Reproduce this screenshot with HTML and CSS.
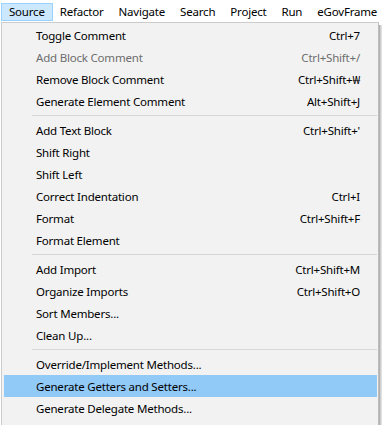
FILE: index.html
```html
<!DOCTYPE html>
<html>
<head>
<meta charset="utf-8">
<link rel="stylesheet" href="styles.css">
</head>
<body>
<div class="menubar">
  <div class="mb-item active">Source</div>
  <div class="mb-item">Refactor</div>
  <div class="mb-item">Navigate</div>
  <div class="mb-item">Search</div>
  <div class="mb-item">Project</div>
  <div class="mb-item">Run</div>
  <div class="mb-item">eGovFrame</div>
</div>
<div class="stage">
  <div class="editor-edge"></div>
  <div class="menu">
    <div class="item"><span>Toggle Comment</span><span class="key">Ctrl+7</span></div>
    <div class="item disabled"><span>Add Block Comment</span><span class="key">Ctrl+Shift+/</span></div>
    <div class="item"><span>Remove Block Comment</span><span class="key">Ctrl+Shift+₩</span></div>
    <div class="item"><span>Generate Element Comment</span><span class="key">Alt+Shift+J</span></div>
    <div class="sep"></div>
    <div class="item"><span>Add Text Block</span><span class="key">Ctrl+Shift+'</span></div>
    <div class="item"><span>Shift Right</span></div>
    <div class="item"><span>Shift Left</span></div>
    <div class="item"><span>Correct Indentation</span><span class="key">Ctrl+I</span></div>
    <div class="item"><span>Format</span><span class="key">Ctrl+Shift+F</span></div>
    <div class="item"><span>Format Element</span></div>
    <div class="sep"></div>
    <div class="item"><span>Add Import</span><span class="key">Ctrl+Shift+M</span></div>
    <div class="item"><span>Organize Imports</span><span class="key">Ctrl+Shift+O</span></div>
    <div class="item"><span>Sort Members...</span></div>
    <div class="item"><span>Clean Up...</span></div>
    <div class="sep"></div>
    <div class="item"><span>Override/Implement Methods...</span></div>
    <div class="item selected"><span>Generate Getters and Setters...</span></div>
    <div class="item"><span>Generate Delegate Methods...</span></div>
  </div>
  <div class="shadow"></div>
</div>
</body>
</html>
```
FILE: styles.css
```css
html, body {
  margin: 0;
  padding: 0;
  background: #ffffff;
  width: 382px;
  height: 425px;
  overflow: hidden;
  font-family: "Noto Sans", "Open Sans", sans-serif;
  font-size: 11.5px;
  letter-spacing: -0.2px;
  color: #000;
}
.menubar {
  display: flex;
  height: 22px;
  padding-left: 1px;
  box-sizing: border-box;
  background: #ffffff;
}
.mb-item {
  margin-top: 3px;
  height: 18px;
  padding: 0 7px;
  border: 1px solid transparent;
  box-sizing: border-box;
  line-height: 16px;
  white-space: nowrap;
  margin-left: -1px;
}
.mb-item:first-child { margin-left: 0; }
.mb-item.active {
  background: #cce8ff;
  border-color: #99d1ff;
}
.stage {
  display: flex;
  align-items: stretch;
}
.editor-edge {
  width: 1px;
  background: #ffffff;
}
.menu {
  width: 378px;
  box-sizing: border-box;
  border: 1px solid #cccccc;
  border-right-color: #bdbdbd;
  background: #f2f2f2;
  padding: 1px 0 1px 2px;
  height: 410px;
}
.item {
  height: 22px;
  display: flex;
  justify-content: space-between;
  align-items: center;
  padding: 0 18px 0 32px;
  white-space: nowrap;
}
.item.disabled { color: #6d6d6d; }
.item.selected { background: #91c9f7; margin-right: 1px; }
.sep {
  height: 7px;
  margin-left: 28px;
  margin-right: 1px;
  position: relative;
}
.sep::after {
  content: "";
  position: absolute;
  left: 0;
  right: 0;
  top: 3px;
  height: 1px;
  background: #d7d7d7;
}
.shadow {
  width: 3px;
  margin-top: 3px;
  background: linear-gradient(to right, #a0a0a0, #d0d0d0, #e8e8e8);
}
```
